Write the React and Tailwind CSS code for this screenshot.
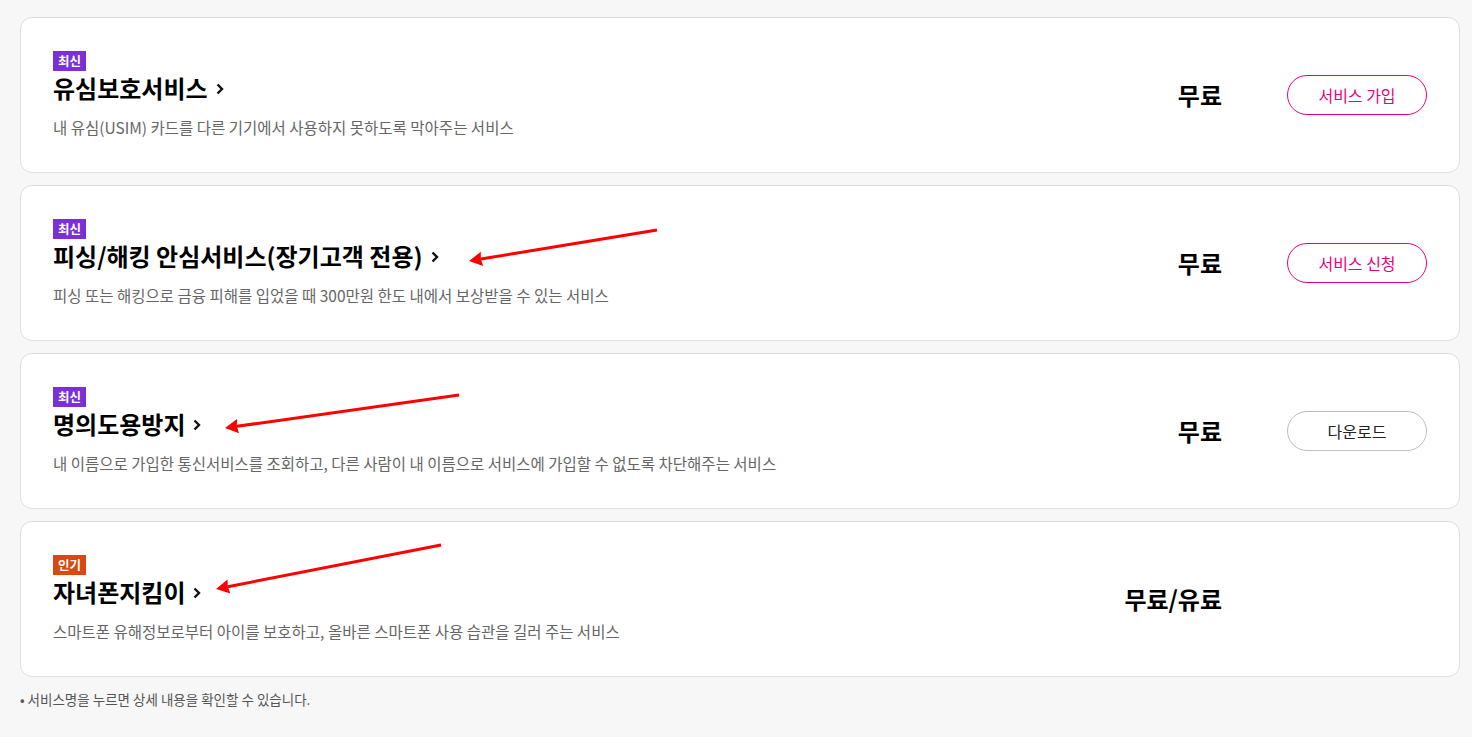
import React from "react";

const services = [
  {
    badge: "최신",
    badgeColor: "bg-[#7c2fd6]",
    title: "유심보호서비스",
    desc: "내 유심(USIM) 카드를 다른 기기에서 사용하지 못하도록 막아주는 서비스",
    price: "무료",
    button: "서비스 가입",
    pink: true,
  },
  {
    badge: "최신",
    badgeColor: "bg-[#7c2fd6]",
    title: "피싱/해킹 안심서비스(장기고객 전용)",
    desc: "피싱 또는 해킹으로 금융 피해를 입었을 때 300만원 한도 내에서 보상받을 수 있는 서비스",
    price: "무료",
    button: "서비스 신청",
    pink: true,
  },
  {
    badge: "최신",
    badgeColor: "bg-[#7c2fd6]",
    title: "명의도용방지",
    desc: "내 이름으로 가입한 통신서비스를 조회하고, 다른 사람이 내 이름으로 서비스에 가입할 수 없도록 차단해주는 서비스",
    price: "무료",
    button: "다운로드",
    pink: false,
  },
  {
    badge: "인기",
    badgeColor: "bg-[#d9480f]",
    title: "자녀폰지킴이",
    desc: "스마트폰 유해정보로부터 아이를 보호하고, 올바른 스마트폰 사용 습관을 길러 주는 서비스",
    price: "무료/유료",
    button: null,
  },
];

// red annotation arrows drawn over the page
const arrows = [
  { x1: 657, y1: 230, x2: 469, y2: 261 },
  { x1: 459, y1: 395, x2: 225, y2: 428 },
  { x1: 441, y1: 545, x2: 216, y2: 589 },
];

function Arrow({ x1, y1, x2, y2 }) {
  const ang = Math.atan2(y2 - y1, x2 - x1);
  const len = 15;
  const half = 0.5;
  const ax = x2 - len * Math.cos(ang - half);
  const ay = y2 - len * Math.sin(ang - half);
  const bx = x2 - len * Math.cos(ang + half);
  const by = y2 - len * Math.sin(ang + half);
  const mx = x2 - (len - 3) * Math.cos(ang);
  const my = y2 - (len - 3) * Math.sin(ang);
  return (
    <g>
      <line x1={x1} y1={y1} x2={mx} y2={my} stroke="#f00" strokeWidth="3" />
      <polygon points={`${x2},${y2} ${ax},${ay} ${mx},${my} ${bx},${by}`} fill="#f00" />
    </g>
  );
}

function ServiceCard({ s }) {
  return (
    <div className="flex items-center rounded-[12px] border border-[#dedede] bg-white px-[32px] h-[156px]">
      <div className="flex-1 min-w-0 pb-[5px]">
        <span
          className={`inline-flex h-5 items-center px-[5px] text-[12.5px] font-bold leading-none text-white ${s.badgeColor}`}
        >
          {s.badge}
        </span>
        <div className="mt-[1px] flex items-center text-[24px] font-bold leading-[32px] text-black">
          {s.title}
          <svg width="10" height="14" viewBox="0 0 10 14" className="ml-[7px] mt-[1px]">
            <path d="M2.5 2.5 L7 7 L2.5 11.5" fill="none" stroke="#111" strokeWidth="2.4" />
          </svg>
        </div>
        <p className="mt-[12px] text-[15.5px] leading-[22px] text-[#666]">{s.desc}</p>
      </div>
      <div className="w-[160px] text-right text-[24px] font-bold text-black">
        {s.price}
      </div>
      <div className="ml-[65px] w-[140px]">
        {s.button ? (
          <button
            className={`h-10 w-full rounded-full border bg-white text-[16px] ${
              s.pink ? "border-[#e6007e] text-[#e6007e]" : "border-[#bdbdbd] text-[#222]"
            }`}
          >
            {s.button}
          </button>
        ) : null}
      </div>
    </div>
  );
}

export default function App() {
  return (
    <div
      className="relative min-h-[737px] bg-[#f7f7f7] pl-5 pr-3 pt-[17px]"
      style={{ fontFamily: '"Noto Sans CJK KR", "Noto Sans", sans-serif' }}
    >
      <div className="flex flex-col gap-[12px]">
        {services.map((s) => (
          <ServiceCard key={s.title} s={s} />
        ))}
      </div>
      <p className="mt-[12px] text-[13.5px] text-[#555]">• 서비스명을 누르면 상세 내용을 확인할 수 있습니다.</p>

      <svg className="pointer-events-none absolute left-0 top-0" width="1472" height="737">
        {arrows.map((a, i) => (
          <Arrow key={i} {...a} />
        ))}
      </svg>
    </div>
  );
}
